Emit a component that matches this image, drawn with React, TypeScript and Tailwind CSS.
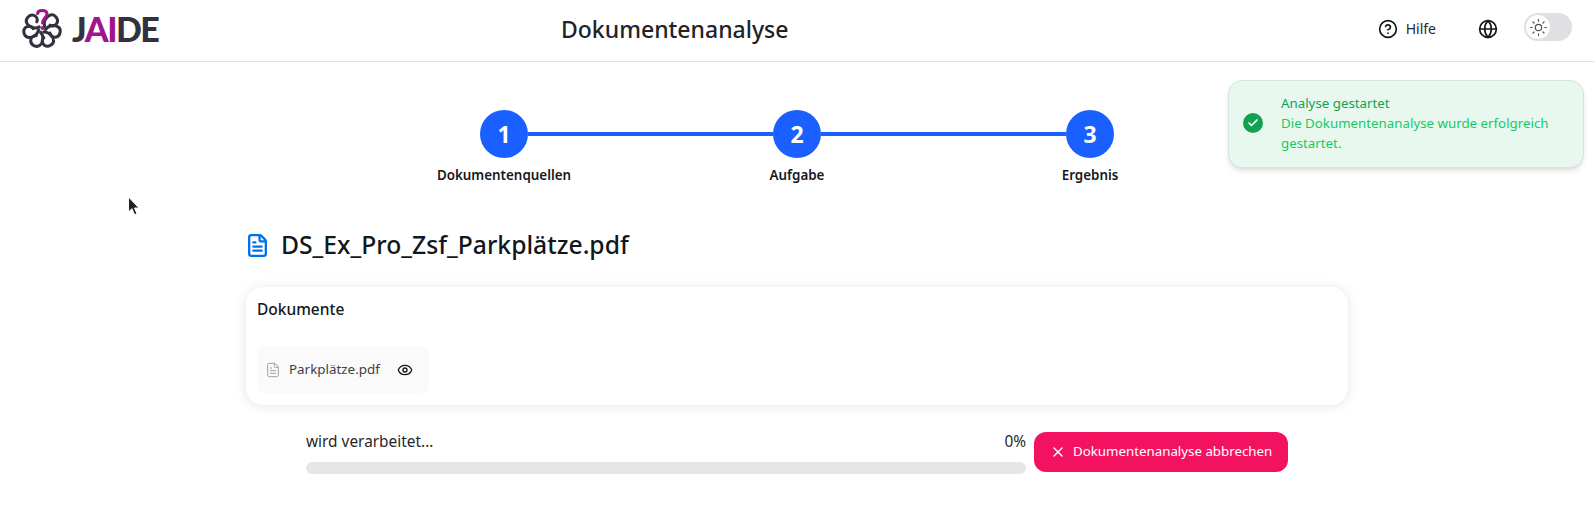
import { Check, CircleHelp, Eye, FileText, Globe, Sun, X } from 'lucide-react';

const FONT = "font-['Noto_Sans',sans-serif]";

const steps = ['Dokumentenquellen', 'Aufgabe', 'Ergebnis'];

const Logo = () => (
  <div className="flex items-center gap-[10px]">
    <svg width="40" height="40" viewBox="0 0 40 40" fill="none">
      {[48, 100, 152, 204, 256, 308].map((angle) => (
        <path
          key={angle}
          transform={`rotate(${angle} 20 20)`}
          d="M20 16.500C15.500 14.500 13.500 9 15 5C16.500 .5 23.500 .5 25.500 4.500C27 8 25 11 22.500 11.500"
          stroke="#32323e"
          strokeWidth="3"
          strokeLinecap="round"
        />
      ))}
      <path
        d="M15.500 4.500C16 .5 24.500 .5 25 4.500C25.500 8 20.500 9.500 20.500 14"
        stroke="#a0148c"
        strokeWidth="3"
        strokeLinecap="round"
      />
      <circle cx="20.500" cy="19" r="2" fill="#a0148c" />
    </svg>
    <span className="font-['Lato',sans-serif] text-[34px] leading-none font-black tracking-[-1.5px] text-[#32323e]">
      J<span className="text-[#a0148c]">AI</span>DE
    </span>
  </div>
);

const Header = () => (
  <header className="relative flex h-[62px] items-center justify-between border-b border-[#e0e0e0] px-[22px] pb-1">
    <Logo />
    <h1 className="absolute left-[561px] text-[23px] leading-8 font-medium text-[#1f2227]">
      Dokumentenanalyse
    </h1>
    <div className="flex items-center">
      <CircleHelp className="h-5 w-5 text-[#11181c]" strokeWidth={2} />
      <span className="ml-2 text-sm text-[#27272a]">Hilfe</span>
      <Globe className="ml-[42px] h-5 w-5 text-[#11181c]" strokeWidth={2} />
      <div className="mb-[3px] ml-[26px] flex h-7 w-12 items-center rounded-full bg-[#e0e0e3] pl-0.5">
        <div className="flex h-6 w-6 items-center justify-center rounded-full bg-white blur-[0.3px]">
          <Sun className="h-[19px] w-[19px] text-[#52525b]" strokeWidth={1.5} />
        </div>
      </div>
    </div>
  </header>
);

const Stepper = () => (
  <div className="pt-[48px]">
    <div className="flex items-center justify-center">
      {steps.map((step, i) => (
        <div key={step} className="flex items-center">
          {i > 0 && <div className="h-1 w-[245px] bg-[#1a5fff]" />}
          <div className="flex h-12 w-12 items-center justify-center rounded-full bg-[#1a5fff] text-[23px] font-bold text-white">
            {i + 1}
          </div>
        </div>
      ))}
    </div>
    <div className="mt-[7px] flex justify-center">
      {steps.map((step) => (
        <div
          key={step}
          className="w-[293px] text-center text-[13.4px] leading-5 font-semibold text-[#18181b]"
        >
          {step}
        </div>
      ))}
    </div>
  </div>
);

const Toast = () => (
  <div className="absolute top-[80px] left-[1228px] flex h-[88px] w-[356px] items-center rounded-[14px] border border-[#d2e8dc] bg-[#e8f8ef] pr-4 pb-[2px] pl-[14px] shadow-md">
    <div className="flex h-5 w-5 shrink-0 items-center justify-center rounded-full bg-[#12a150]">
      <Check className="h-3 w-3 text-white" strokeWidth={3.5} />
    </div>
    <div className="ml-[18px] text-[13.3px] leading-5">
      <div className="text-[#12a150]">Analyse gestartet</div>
      <div className="text-[#17c964]">Die Dokumentenanalyse wurde erfolgreich gestartet.</div>
    </div>
  </div>
);

const Cursor = () => (
  <svg className="absolute top-[196px] left-[127px]" width="13" height="22" viewBox="0 0 13 22">
    <path d="M1.500 1v15l3.500-3.300 2.500 6 2.500-1-2.500-5.700h4.500z" fill="#222" stroke="#fff" strokeWidth="1" />
  </svg>
);

export default function App() {
  return (
    <div className={`relative h-[529px] w-[1594px] overflow-hidden bg-white ${FONT}`}>
      <Header />
      <Stepper />
      <main className="mx-auto w-[1104px] pt-[44px]">
        <div className="flex h-8 items-center text-[#11181c]">
          <FileText className="h-[25px] w-[25px] text-[#006fee]" strokeWidth={2.2} />
          <h2 className="ml-[11px] text-[24.7px] leading-8 font-medium">DS_Ex_Pro_Zsf_Parkplätze.pdf</h2>
        </div>
        <section className="mt-[25px] h-[120px] rounded-[18px] border border-[#f4f4f5] bg-white px-[11px] pt-[10px] shadow-[0_1px_12px_rgba(0,0,0,0.09)]">
          <h3 className="text-[15.5px] leading-6 font-medium text-[#11181c]">Dokumente</h3>
          <div className="mt-[25px] flex h-[47px] w-[172px] items-center rounded-lg bg-[#fafafa] pl-2">
            <FileText className="h-4 w-4 text-[#a1a1aa]" strokeWidth={1.5} />
            <span className="ml-2 text-[13.4px] text-[#3f3f46]">Parkplätze.pdf</span>
            <Eye className="mr-4 ml-auto h-4 w-4 text-[#11181c]" strokeWidth={2} />
          </div>
        </section>
        <div className="mt-[24px] ml-[61px] flex w-[982px] items-start gap-2">
          <div className="flex-1">
            <div className="flex items-center justify-between text-[15.4px] leading-6 text-[#27272a]">
              <span>wird verarbeitet...</span>
              <span>0%</span>
            </div>
            <div className="mt-2 h-3 rounded-full bg-[#e6e6e9]" />
          </div>
          <button className="mt-[2px] flex h-10 w-[254px] items-center rounded-xl bg-[#f31260] pl-4 text-[13.3px] text-white">
            <X className="h-4 w-4" strokeWidth={2} />
            <span className="ml-[7px]">Dokumentenanalyse abbrechen</span>
          </button>
        </div>
      </main>
      <Toast />
      <Cursor />
    </div>
  );
}
